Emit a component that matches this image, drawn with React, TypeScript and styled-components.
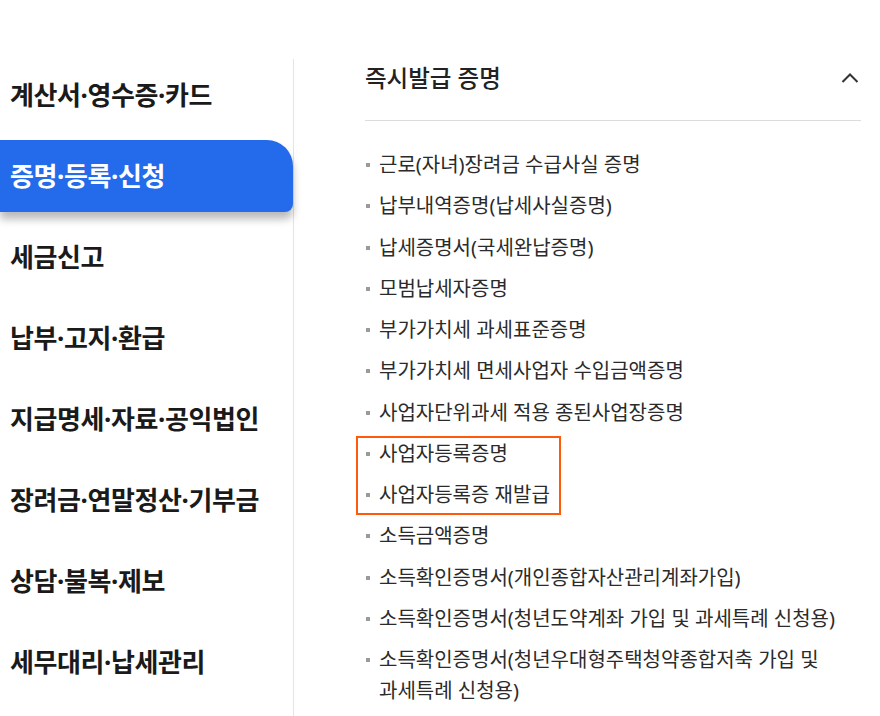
import React from "react";
import styled, { createGlobalStyle } from "styled-components";

const GlobalStyle = createGlobalStyle`
  html, body {
    margin: 0;
    padding: 0;
    background: #ffffff;
    font-family: "Noto Sans", "Noto Sans CJK KR", sans-serif;
  }
  * { box-sizing: border-box; }
`;

const Page = styled.div`
  padding-top: 59px;
`;

const Layout = styled.div`
  display: flex;
  min-height: calc(100vh - 59px);
`;

const Sidebar = styled.nav`
  width: 294px;
  flex-shrink: 0;
  border-right: 1px solid #e4e0f6;
  display: flex;
  flex-direction: column;
  gap: 9px;
`;

const NavItem = styled.a<{ $active?: boolean }>`
  display: flex;
  align-items: center;
  height: 72px;
  width: 293px;
  padding: 0 0 3px 10px;
  font-size: 26px;
  font-weight: 700;
  letter-spacing: -0.4px;
  color: ${(p) => (p.$active ? "#ffffff" : "#1a1a1a")};
  background: ${(p) => (p.$active ? "#246beb" : "transparent")};
  border-radius: ${(p) => (p.$active ? "0 26px 8px 0" : "0")};
  box-shadow: ${(p) => (p.$active ? "0 7px 9px rgba(0,0,0,0.28)" : "none")};
  text-decoration: none;
  cursor: pointer;
`;

const Content = styled.section`
  flex: 1;
  padding: 0 19px 0 71px;
`;

const Header = styled.div`
  display: flex;
  align-items: center;
  justify-content: space-between;
  height: 62px;
  padding-bottom: 24px;
  border-bottom: 1px solid #dcdcdc;
`;

const Title = styled.h2`
  margin: 0;
  font-size: 23.5px;
  line-height: 38px;
  font-weight: 500;
  color: #222222;
`;

const ToggleButton = styled.button`
  border: 0;
  background: none;
  padding: 0;
  margin-right: 2px;
  display: flex;
  align-items: center;
  cursor: pointer;
`;

const List = styled.ul`
  list-style: none;
  margin: 0;
  padding: 28px 0 0;
  display: flex;
  flex-direction: column;
  gap: 10.25px;
`;

const Group = styled.div`
  position: relative;
  display: flex;
  flex-direction: column;
  gap: 10.25px;
  width: fit-content;
  &::after {
    content: "";
    position: absolute;
    top: -2px;
    bottom: -5px;
    left: -9px;
    right: -11px;
    border: 2px solid #ff5a0a;
    pointer-events: none;
  }
`;

const Item = styled.li`
  position: relative;
  padding-left: 14px;
  font-size: 20px;
  line-height: 31px;
  color: #2b2b2b;
  word-break: keep-all;
  &::before {
    content: "";
    position: absolute;
    left: 1px;
    top: 14px;
    width: 4px;
    height: 4px;
    background: #9a9a9a;
  }
`;

const navItems = [
  "계산서·영수증·카드",
  "증명·등록·신청",
  "세금신고",
  "납부·고지·환급",
  "지급명세·자료·공익법인",
  "장려금·연말정산·기부금",
  "상담·불복·제보",
  "세무대리·납세관리",
];

const before = [
  "근로(자녀)장려금 수급사실 증명",
  "납부내역증명(납세사실증명)",
  "납세증명서(국세완납증명)",
  "모범납세자증명",
  "부가가치세 과세표준증명",
  "부가가치세 면세사업자 수입금액증명",
  "사업자단위과세 적용 종된사업장증명",
];

const highlighted = ["사업자등록증명", "사업자등록증 재발급"];

const after = [
  "소득금액증명",
  "소득확인증명서(개인종합자산관리계좌가입)",
  "소득확인증명서(청년도약계좌 가입 및 과세특례 신청용)",
  "소득확인증명서(청년우대형주택청약종합저축 가입 및 과세특례 신청용)",
];

export default function App() {
  return (
    <Page>
      <GlobalStyle />
      <Layout>
        <Sidebar>
          {navItems.map((label, i) => (
            <NavItem key={label} $active={i === 1}>
              {label}
            </NavItem>
          ))}
        </Sidebar>
        <Content>
          <Header>
            <Title>즉시발급 증명</Title>
            <ToggleButton aria-label="접기">
              <svg width="18" height="10" viewBox="0 0 18 10" fill="none">
                <polyline
                  points="1.5,9 9,1.5 16.5,9"
                  stroke="#333"
                  strokeWidth="2"
                  fill="none"
                />
              </svg>
            </ToggleButton>
          </Header>
          <List>
            {before.map((t) => (
              <Item key={t}>{t}</Item>
            ))}
            <Group>
              {highlighted.map((t) => (
                <Item key={t}>{t}</Item>
              ))}
            </Group>
            {after.map((t) => (
              <Item key={t}>{t}</Item>
            ))}
          </List>
        </Content>
      </Layout>
    </Page>
  );
}
